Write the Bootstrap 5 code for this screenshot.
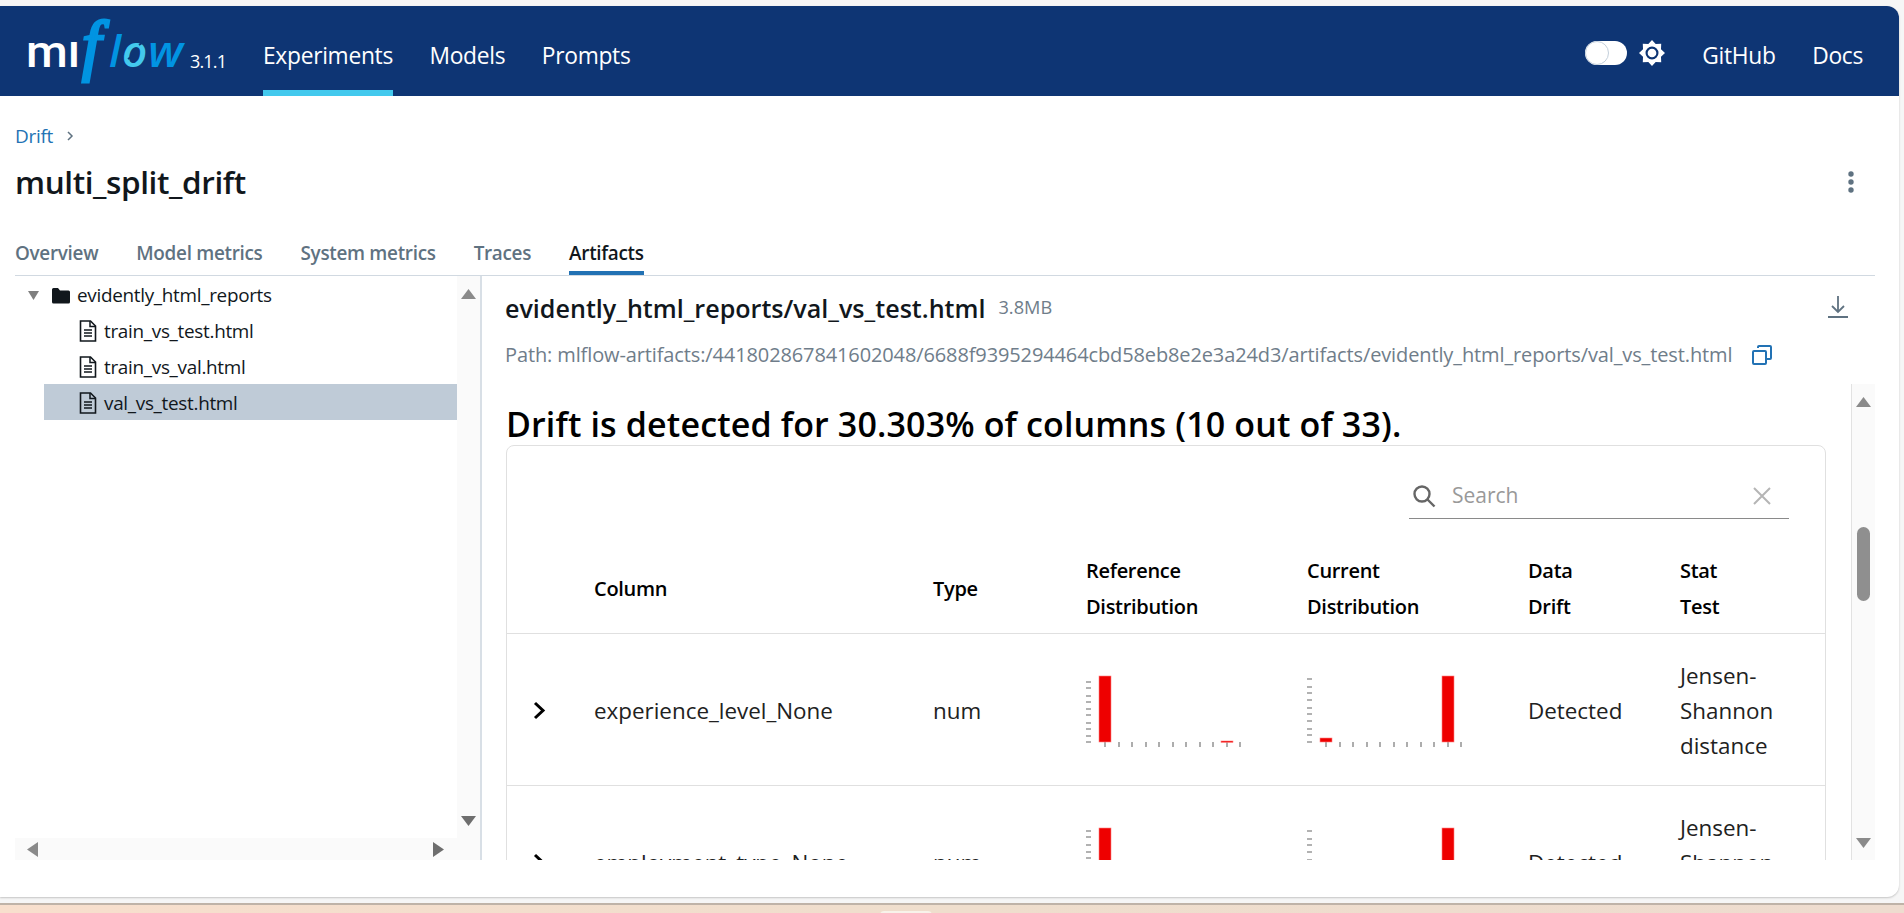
<!DOCTYPE html>
<html lang="en">
<head>
    <meta charset="UTF-8">
    <title>MLflow - multi_split_drift</title>
    <link href="https://cdn.jsdelivr.net/npm/bootstrap@5.3.0/dist/css/bootstrap.min.css" rel="stylesheet">
    <style>
        html, body { height: 913px; overflow: hidden; }
        body { background: #f6f6f6; font-family: "Open Sans", "Liberation Sans", sans-serif; color: #11171c; }
        .app-window { margin-top: 6px; width: 1899px; height: 891px; background: #fff; border-radius: 0 12px 12px 0; overflow: hidden; box-shadow: 0 1px 2px #c4c4c4; }
        .wallpaper { margin-top: 6px; height: 10px; border-top: 2px solid #bfb3a8; background: linear-gradient(90deg, #f8dfcd, #efdecd 50%, #eedccf); }
        .wallpaper-tab { width: 52px; height: 4px; margin: 6px 0 0 880px; background: #f8f3ea; border-radius: 4px 4px 0 0; }

        /* top bar */
        .top-bar { height: 90px; background: #0e3574; padding: 0 36px 0 27px; flex-wrap: nowrap; }
        .brand-logo { overflow: visible; flex: none; margin-right: 38px; }
        .top-link { height: 90px; padding-top: 10px; display: flex; align-items: center; color: #fff; font-size: 22.8px; text-decoration: none; letter-spacing: -.3px; margin-right: 36.5px; }
        .top-link:last-child { margin-right: 0; }
        .top-link-active { box-shadow: inset 0 -6px 0 #43c9ed; }
        .mode-switch { width: 42px; height: 24px; margin: 4px 12px 0 auto; border-radius: 12px; background: #fff; display: block; }
        .mode-knob { width: 24px; height: 24px; border-radius: 50%; border: 1.5px solid #c3cfdb; background: #fff; display: block; }
        .mode-sun { margin: 4px 37px 0 0; flex: none; }

        /* run header */
        .run-head { padding: 0 24px 0 15px; }
        .crumb-row { margin-top: 26px; height: 28px; font-size: 19px; letter-spacing: -.3px; gap: 12px; }
        .crumb-row a { color: #2272b4; text-decoration: none; }
        .run-title { font-size: 31.5px; font-weight: 600; margin: 0; letter-spacing: -.4px; }
        .title-row { margin-top: 8px; height: 48px; padding-right: 20px; }
        .tab-row { margin-top: 26px; border-bottom: 1.5px solid #d1d9e1; gap: 38px; }
        .tab-link { height: 43px; display: flex; align-items: center; color: #5f7281; font-size: 18.9px; font-weight: 600; text-decoration: none; letter-spacing: -.3px; }
        .tab-link-active { color: #11171c; box-shadow: inset 0 -4px 0 #2272b4; }

        /* artifacts */
        .artifact-body { height: 584px; margin-left: 12px; width: 1863px; }
        .file-side { width: 470px; border-right: 2px solid #d8dfe6; }
        .file-tree { font-size: 18.9px; letter-spacing: -.3px; }
        .tree-item { height: 36px; margin-left: 32px; padding: 2px 0 0 35px; gap: 7px; }
        .tree-folder { margin-left: 16px; padding-left: 0; gap: 6px; }
        .folder-icon { margin-left: 6px; }
        .tree-selected { background: #bfcbd7; }
        .bar-track { background: #fafafa; }
        .bar-v { width: 23px; flex: none; padding: 13px 0 12px; }
        .bar-h { height: 22px; padding: 0 12px; margin: auto 0 0 3px; flex: none; }
        .preview-head { height: 108px; padding: 14px 26px 0 23px; }
        .preview-name { font-size: 25.1px; font-weight: 600; margin: 0; }
        .preview-size { font-size: 18.2px; color: #6f7d8a; margin-left: 13px; }
        .download-icon { margin: -2px 0 0 auto; }
        .preview-path { margin-top: 14px; height: 30px; font-size: 20px; color: #6f7d8a; letter-spacing: -.12px; }
        .copy-icon { margin-left: 19px; }
        .report-frame { height: 476px; overflow: hidden; }
        .report-scroll { flex: 1; padding: 19px 25px 0 24px; border-right: 1px solid #e2e2e2; overflow: hidden; min-width: 0; }
        .report-title { font-size: 34px; font-weight: 600; color: #000; margin: 0; line-height: 42px; letter-spacing: .14px; white-space: nowrap; }
        .report-card { border: 1px solid #e0e0e0; border-radius: 8px; width: 1320px; }
        .search-box { width: 380px; height: 49px; margin: 24px 36px 0 auto; border-bottom: 1px solid #8a8a8a; padding: 4px 18px 0 3px; color: #999; font-size: 21px; }
        .drift-table { table-layout: fixed; width: 1319px; margin: 27px 0 0; font-size: 22.4px; }
        .drift-table > :not(caption) > * > * { padding: 0 16px; vertical-align: middle; border-color: #e0e0e0; box-shadow: none; }
        .drift-table > tbody > tr > td { padding-top: 2px; }
        .drift-table th { height: 87px; font-weight: 600; font-size: 20px; letter-spacing: -.3px; line-height: 36px; color: #000; }
        .drift-table td { height: 152px; line-height: 35px; color: #212121; }
        .row-caret { margin-left: 9px; display: block; }
        .chart { display: block; margin-top: -2px; }
        .chart-tick { stroke: #999; stroke-width: 1.6; fill: none; }
        .chart-bar { fill: #ee0000; stroke: #ff8080; stroke-width: .6; }
        .scroll-thumb { width: 13px; height: 74px; margin-top: 119px; background: #8f8f8f; border-radius: 7px; }
    </style>
</head>
<body>
    <div class="app-window d-flex flex-column">
        <!-- top bar -->
        <nav class="navbar top-bar d-flex align-items-center justify-content-start">
            <svg class="brand-logo" width="198" height="60" viewBox="0 0 198 60" role="img" aria-label="mlflow 3.1.1">
                <text x="-1" y="46" fill="#fff" font-family="Roboto, sans-serif" font-weight="500" font-size="44" textLength="54" lengthAdjust="spacingAndGlyphs">ml</text>
                <rect x="38" y="8" width="14" height="13" fill="#0e3574"/>
                <text x="55" y="47" fill="#0194e2" stroke="#0194e2" stroke-width="3" font-family="Liberation Serif, serif" font-style="italic" font-size="68">f</text>
                <text x="82" y="46" fill="#0194e2" font-family="Open Sans, sans-serif" font-style="italic" font-weight="600" font-size="44">l</text>
                <text x="95" y="46" fill="#43c9ed" font-family="Open Sans, sans-serif" font-style="italic" font-weight="600" font-size="44">o</text>
                <path d="M101 38l6-4M112 24l6-4" stroke="#0e3574" stroke-width="2" fill="none"/>
                <text x="121" y="46" fill="#0194e2" font-family="Open Sans, sans-serif" font-style="italic" font-weight="600" font-size="44" textLength="35" lengthAdjust="spacingAndGlyphs">w</text>
                <text x="163" y="47" fill="#fff" font-family="Open Sans, sans-serif" font-size="18" textLength="37">3.1.1</text>
            </svg>
            <a class="top-link top-link-active" href="#">Experiments</a>
            <a class="top-link" href="#">Models</a>
            <a class="top-link" href="#">Prompts</a>
            <span class="mode-switch"><span class="mode-knob"></span></span>
            <svg class="mode-sun" width="26" height="26" viewBox="-12 -12 24 24">
                <polygon fill="#fff" points="0,-12 3.4,-8.3 8.5,-8.5 8.3,-3.4 12,0 8.3,3.4 8.5,8.5 3.4,8.3 0,12 -3.4,8.3 -8.5,8.5 -8.3,3.4 -12,0 -8.3,-3.4 -8.5,-8.5 -3.4,-8.3"/>
                <circle r="5" fill="#fff" stroke="#0e3574" stroke-width="2"/>
            </svg>
            <a class="top-link" href="#">GitHub</a>
            <a class="top-link" href="#">Docs</a>
        </nav>

        <!-- run header -->
        <div class="run-head">
            <div class="crumb-row d-flex align-items-center">
                <a href="#">Drift</a>
                <svg width="10" height="12" viewBox="0 0 10 12"><path d="M3 2l4 4-4 4" fill="none" stroke="#5f7281" stroke-width="1.5"/></svg>
            </div>
            <div class="title-row d-flex align-items-center justify-content-between">
                <h1 class="run-title">multi_split_drift</h1>
                <svg width="8" height="22" viewBox="0 0 8 22" fill="#5f7281"><circle cx="4" cy="3" r="2.7"/><circle cx="4" cy="11" r="2.7"/><circle cx="4" cy="19" r="2.7"/></svg>
            </div>
            <div class="tab-row d-flex">
                <a class="tab-link" href="#">Overview</a>
                <a class="tab-link" href="#">Model metrics</a>
                <a class="tab-link" href="#">System metrics</a>
                <a class="tab-link" href="#">Traces</a>
                <a class="tab-link tab-link-active" href="#">Artifacts</a>
            </div>
        </div>

        <!-- artifacts -->
        <div class="artifact-body d-flex">
            <div class="file-side d-flex flex-column">
                <div class="d-flex flex-grow-1">
                    <div class="file-tree flex-grow-1">
                        <div class="tree-item tree-folder d-flex align-items-center">
                            <svg width="11" height="11" viewBox="0 0 11 11"><path d="M0 1h11L5.5 10z" fill="#7f7f7f"/></svg>
                            <svg class="folder-icon" width="20" height="17" viewBox="0 0 20 17"><path d="M1 2.500A1.500 1.500 0 0 1 2.500 1h4.500l2 2.500h8.500A1.500 1.500 0 0 1 19 5v10a1.500 1.500 0 0 1-1.500 1.500h-15A1.500 1.500 0 0 1 1 15z" fill="#11171c"/></svg>
                            <span>evidently_html_reports</span>
                        </div>
                        <div class="tree-item d-flex align-items-center">
                            <svg width="18" height="22" viewBox="0 0 18 22"><use href="#fileIcon"/></svg>
                            <span>train_vs_test.html</span>
                        </div>
                        <div class="tree-item d-flex align-items-center">
                            <svg width="18" height="22" viewBox="0 0 18 22"><use href="#fileIcon"/></svg>
                            <span>train_vs_val.html</span>
                        </div>
                        <div class="tree-item tree-selected d-flex align-items-center">
                            <svg width="18" height="22" viewBox="0 0 18 22"><use href="#fileIcon"/></svg>
                            <span>val_vs_test.html</span>
                        </div>
                    </div>
                    <div class="bar-track bar-v d-flex flex-column align-items-center justify-content-between">
                        <svg width="15" height="11" viewBox="0 0 15 11"><path d="M7.500 0L15 10H0z" fill="#8a8a8a"/></svg>
                        <svg width="15" height="11" viewBox="0 0 15 11"><path d="M0 1h15L7.500 11z" fill="#6e6e6e"/></svg>
                    </div>
                </div>
                <div class="bar-track bar-h d-flex align-items-center justify-content-between">
                    <svg width="12" height="15" viewBox="0 0 12 15"><path d="M11 0v15L0 7.500z" fill="#8a8a8a"/></svg>
                    <svg class="me-4" width="12" height="15" viewBox="0 0 12 15"><path d="M1 0v15l11-7.500z" fill="#6e6e6e"/></svg>
                </div>
            </div>

            <div class="flex-grow-1 d-flex flex-column" style="min-width:0">
                <div class="preview-head">
                    <div class="d-flex align-items-center" style="height:36px">
                        <h2 class="preview-name">evidently_html_reports/val_vs_test.html</h2>
                        <span class="preview-size">3.8MB</span>
                        <svg class="download-icon" width="22" height="24" viewBox="0 0 22 24" fill="none" stroke="#5f7281" stroke-width="1.8"><path d="M11 1v15M5 11l6 6 6-6M1 22h20"/></svg>
                    </div>
                    <div class="preview-path d-flex align-items-center">
                        <span>Path: mlflow-artifacts:/441802867841602048/6688f9395294464cbd58eb8e2e3a24d3/artifacts/evidently_html_reports/val_vs_test.html</span>
                        <svg class="copy-icon" width="22" height="22" viewBox="0 0 22 22" fill="none" stroke="#2272b4" stroke-width="2"><path d="M7 4V3a1 1 0 0 1 1-1h11a1 1 0 0 1 1 1v11a1 1 0 0 1-1 1h-4"/><rect x="2" y="7" width="13" height="13" rx="1"/></svg>
                    </div>
                </div>
                <div class="report-frame d-flex">
                    <div class="report-scroll">
                        <h3 class="report-title">Drift is detected for 30.303% of columns (10 out of 33).</h3>
                        <div class="report-card">
                            <div class="search-box d-flex align-items-center">
                                <svg width="24" height="24" viewBox="0 0 24 24" fill="none" stroke="#666" stroke-width="2.400"><circle cx="10" cy="10" r="7.500"/><path d="M15.500 15.500l7 7"/></svg>
                                <span class="ms-3">Search</span>
                                <svg class="ms-auto" width="18" height="18" viewBox="0 0 18 18" stroke="#b5b5b5" stroke-width="2"><path d="M1 1l16 16M17 1L1 17"/></svg>
                            </div>
                            <table class="table drift-table">
                                <colgroup><col style="width:71px"><col style="width:339px"><col style="width:153px"><col style="width:221px"><col style="width:221px"><col style="width:152px"><col style="width:162px"></colgroup>
                                <thead>
                                    <tr><th></th><th>Column</th><th>Type</th><th>Reference<br>Distribution</th><th>Current<br>Distribution</th><th>Data<br>Drift</th><th>Stat<br>Test</th></tr>
                                </thead>
                                <tbody>
                                    <tr>
                                        <td><svg width="16" height="19" viewBox="0 0 16 19" class="row-caret" fill="none" stroke="#000" stroke-width="3"><path d="M3 2l8 7.500L3 17"/></svg></td>
                                        <td>experience_level_None</td>
                                        <td>num</td>
                                        <td>
                                            <svg class="chart" width="180" height="100" viewBox="0 0 180 100">
                                                <path class="chart-tick" d="M0 23h5M0 29h5M0 37h5M0 43h5M0 50h5M0 56h5M0 64h5M0 70h5M0 77h5M0 83h5M19 83v5M33 83v5M46 83v5M60 83v5M73 83v5M87 83v5M100 83v5M114 83v5M127 83v5M141 83v5M154 83v5"/>
                                                <rect class="chart-bar" x="13" y="17" width="12" height="66"/>
                                                <rect class="chart-bar" x="135" y="82" width="12" height="1.400"/>
                                            </svg>
                                        </td>
                                        <td>
                                            <svg class="chart" width="180" height="100" viewBox="0 0 180 100">
                                                <path class="chart-tick" d="M0 20h5M0 28h5M0 34h5M0 41h5M0 49h5M0 55h5M0 62h5M0 70h5M0 76h5M0 83h5M19 83v5M33 83v5M46 83v5M60 83v5M73 83v5M87 83v5M100 83v5M114 83v5M127 83v5M141 83v5M154 83v5"/>
                                                <rect class="chart-bar" x="13" y="79" width="12" height="4"/>
                                                <rect class="chart-bar" x="135" y="17" width="12" height="66"/>
                                            </svg>
                                        </td>
                                        <td>Detected</td>
                                        <td>Jensen-<br>Shannon<br>distance</td>
                                    </tr>
                                    <tr>
                                        <td><svg width="16" height="19" viewBox="0 0 16 19" class="row-caret" fill="none" stroke="#000" stroke-width="3"><path d="M3 2l8 7.500L3 17"/></svg></td>
                                        <td>employment_type_None</td>
                                        <td>num</td>
                                        <td>
                                            <svg class="chart" width="180" height="100" viewBox="0 0 180 100">
                                                <path class="chart-tick" d="M0 20h5M0 26h5M0 34h5M0 41h5M0 47h5M0 55h5"/>
                                                <rect class="chart-bar" x="13" y="17" width="12" height="66"/>
                                            </svg>
                                        </td>
                                        <td>
                                            <svg class="chart" width="180" height="100" viewBox="0 0 180 100">
                                                <path class="chart-tick" d="M0 20h5M0 28h5M0 34h5M0 41h5M0 49h5M0 55h5"/>
                                                <rect class="chart-bar" x="135" y="17" width="12" height="66"/>
                                            </svg>
                                        </td>
                                        <td>Detected</td>
                                        <td>Jensen-<br>Shannon<br>distance</td>
                                    </tr>
                                </tbody>
                            </table>
                        </div>
                    </div>
                    <div class="bar-track bar-v d-flex flex-column align-items-center">
                        <svg width="15" height="11" viewBox="0 0 15 11"><path d="M7.500 0L15 10H0z" fill="#8a8a8a"/></svg>
                        <div class="scroll-thumb"></div>
                        <svg class="mt-auto" width="15" height="11" viewBox="0 0 15 11"><path d="M0 1h15L7.500 11z" fill="#8a8a8a"/></svg>
                    </div>
                </div>
            </div>
        </div>
    </div>
    <div class="wallpaper"><div class="wallpaper-tab"></div></div>

    <svg width="0" height="0" class="position-absolute">
        <symbol id="fileIcon" viewBox="0 0 18 22">
            <path d="M1.500 1h10l5 5v15h-15z" fill="none" stroke="#11171c" stroke-width="1.600"/>
            <path d="M11 1v5.500h5.500M5 10h8M5 13h8M5 16h8" fill="none" stroke="#11171c" stroke-width="1.500"/>
        </symbol>
    </svg>
    <script src="https://cdn.jsdelivr.net/npm/bootstrap@5.3.0/dist/js/bootstrap.bundle.min.js"></script>
</body>
</html>
